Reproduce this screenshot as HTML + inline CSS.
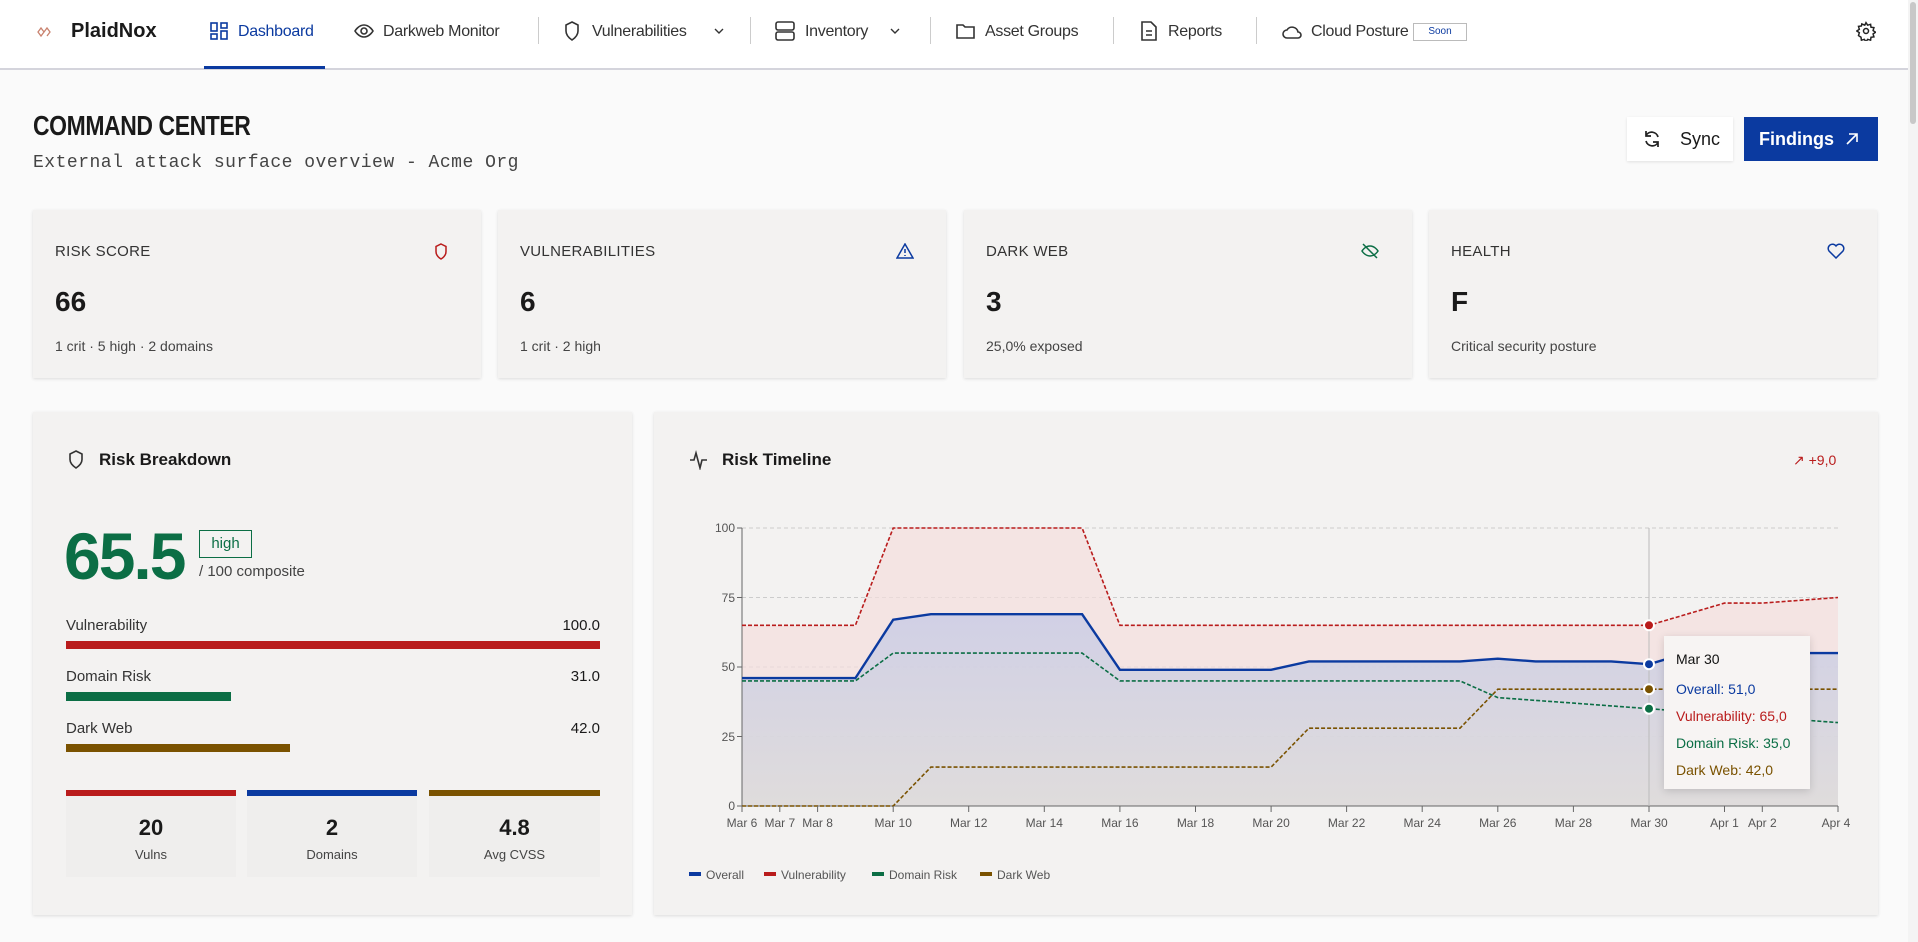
<!DOCTYPE html>
<html><head><meta charset="utf-8"><style>
*{box-sizing:border-box;margin:0;padding:0}
body{width:1918px;height:942px;overflow:hidden;background:#fafafa;font-family:"Liberation Sans",sans-serif;color:#1a1a1a;position:relative}
.a{position:absolute;white-space:nowrap}
.nav{position:absolute;left:0;top:0;width:1908px;height:70px;background:#fff;border-bottom:2px solid #d4d4dc}
.nt{font-size:16px;letter-spacing:-.3px;color:#333;top:23px}
.sep{position:absolute;top:17px;width:1px;height:27px;background:#ccc}
.card{position:absolute;background:#f3f2f1;box-shadow:0 1px 3px rgba(0,0,0,.12)}
.lbl{font-size:15px;color:#333;letter-spacing:.3px}
.val{font-size:28px;font-weight:bold}
.sub{font-size:14px;color:#444}
</style></head><body>
<div class="nav"></div>
<div style="position:absolute;right:0;top:0;width:10px;height:942px;background:#f4f4f4"></div>
<div style="position:absolute;right:2px;top:2px;width:6px;height:122px;background:#c8c8c8;border-radius:3px"></div>
<svg class="a" style="left:36px;top:25px" width="16" height="14" viewBox="0 0 16 14"><path d="M2 7l3-4 3 4-3 4zM8 7l3-4 3 4-3 4" fill="none" stroke="#c9826e" stroke-width="1.3"/></svg>
<div class="a" style="left:71px;top:20px;font-size:20px;font-weight:bold">PlaidNox</div>
<svg class="a" style="left:210px;top:22px" width="18" height="18" viewBox="0 0 18 18" fill="none" stroke="#0b3aa0" stroke-width="1.6"><rect x="1" y="1" width="6" height="8"/><rect x="11" y="1" width="6" height="5"/><rect x="1" y="12" width="6" height="5"/><rect x="11" y="9" width="6" height="8"/></svg>
<div class="a nt" style="left:238px;color:#0b3aa0">Dashboard</div>
<div style="position:absolute;left:204px;top:66px;width:121px;height:3px;background:#0b3aa0"></div>
<svg class="a" style="left:354px;top:23px" width="20" height="16" viewBox="0 0 20 16" fill="none" stroke="#333" stroke-width="1.6"><path d="M1 8s3.5-6 9-6 9 6 9 6-3.5 6-9 6-9-6-9-6z"/><circle cx="10" cy="8" r="3"/></svg>
<div class="a nt" style="left:383px">Darkweb Monitor</div>
<div class="sep" style="left:538px"></div>
<svg class="a" style="left:564px;top:21px" width="16" height="20" viewBox="0 0 16 20" fill="none" stroke="#333" stroke-width="1.6"><path d="M8 1l6 3v6c0 4-3 7-6 9-3-2-6-5-6-9V4z"/></svg>
<div class="a nt" style="left:592px">Vulnerabilities</div>
<svg class="a" style="left:714px;top:28px" width="10" height="7" viewBox="0 0 10 7" fill="none" stroke="#333" stroke-width="1.4"><path d="M1 1l4 4 4-4"/></svg>
<div class="sep" style="left:750px"></div>
<svg class="a" style="left:775px;top:21px" width="20" height="20" viewBox="0 0 20 20" fill="none" stroke="#333" stroke-width="1.6"><rect x="1" y="1" width="18" height="8" rx="2"/><rect x="1" y="11" width="18" height="8" rx="2"/></svg>
<div class="a nt" style="left:805px">Inventory</div>
<svg class="a" style="left:890px;top:28px" width="10" height="7" viewBox="0 0 10 7" fill="none" stroke="#333" stroke-width="1.4"><path d="M1 1l4 4 4-4"/></svg>
<div class="sep" style="left:930px"></div>
<svg class="a" style="left:956px;top:23px" width="20" height="16" viewBox="0 0 20 16" fill="none" stroke="#333" stroke-width="1.6"><path d="M1 2h6l2 2h9v11H1z"/></svg>
<div class="a nt" style="left:985px">Asset Groups</div>
<div class="sep" style="left:1113px"></div>
<svg class="a" style="left:1141px;top:21px" width="16" height="20" viewBox="0 0 16 20" fill="none" stroke="#333" stroke-width="1.6"><path d="M1 1h9l5 5v13H1z M5 10h6 M5 14h6"/></svg>
<div class="a nt" style="left:1168px">Reports</div>
<div class="sep" style="left:1256px"></div>
<svg class="a" style="left:1282px;top:24px" width="20" height="15" viewBox="0 0 20 15" fill="none" stroke="#333" stroke-width="1.6"><path d="M5 14a4 4 0 010-8 6 6 0 0111 2 3 3 0 010 6z"/></svg>
<div class="a nt" style="left:1311px">Cloud Posture</div>
<div class="a" style="left:1413px;top:23px;width:54px;height:18px;border:1px solid #bbb;font-size:10px;color:#0b3aa0;text-align:center;line-height:16px">Soon</div>
<svg class="a" style="left:1856px;top:21px" width="20" height="20" viewBox="0 0 24 24" fill="none" stroke="#222" stroke-width="1.8"><circle cx="12" cy="12" r="3"/><path d="M12 2l2 3 3.5-1 .5 3.5 3.5.5-1 3.5 3 2-3 2 1 3.5-3.5.5-.5 3.5-3.5-1-2 3-2-3-3.5 1-.5-3.5L3 17.5l1-3.5-3-2 3-2-1-3.5 3.5-.5L7 3.5 10.5 5z"/></svg>

<div class="a" style="left:33px;top:110px;font-size:28px;font-weight:bold;transform:scaleX(.82);transform-origin:left;letter-spacing:-.5px">COMMAND CENTER</div>
<div class="a" style="left:33px;top:153px;font-family:'Liberation Mono',monospace;font-size:18px;letter-spacing:.5px;color:#444">External attack surface overview - Acme Org</div>
<div class="a" style="left:1627px;top:117px;width:106px;height:44px;background:#fff;box-shadow:0 1px 3px rgba(0,0,0,.1)"></div>
<svg class="a" style="left:1642px;top:129px" width="20" height="20" viewBox="0 0 20 20" fill="none" stroke="#222" stroke-width="1.7"><path d="M16 8a6.5 6.5 0 00-12-1.5M4 2v5h5 M4 12a6.5 6.5 0 0012 1.5M16 18v-5h-5"/></svg>
<div class="a" style="left:1680px;top:129px;font-size:18px">Sync</div>
<div class="a" style="left:1744px;top:117px;width:134px;height:44px;background:#0b3aa0"></div>
<div class="a" style="left:1759px;top:129px;font-size:18px;font-weight:bold;color:#fff">Findings</div>
<svg class="a" style="left:1846px;top:133px" width="12" height="12" viewBox="0 0 12 12" fill="none" stroke="#fff" stroke-width="1.6"><path d="M1 11L11 1M3 1h8v8"/></svg>

<div class="card" style="left:33px;top:210px;width:448px;height:168px"></div>
<div class="card" style="left:498px;top:210px;width:448px;height:168px"></div>
<div class="card" style="left:964px;top:210px;width:448px;height:168px"></div>
<div class="card" style="left:1429px;top:210px;width:448px;height:168px"></div>
<div class="a lbl" style="left:55px;top:243px">RISK SCORE</div>
<div class="a val" style="left:55px;top:286px">66</div>
<div class="a sub" style="left:55px;top:338px">1 crit · 5 high · 2 domains</div>
<svg class="a" style="left:434px;top:243px" width="14" height="17" viewBox="0 0 14 17" fill="none" stroke="#b91c1c" stroke-width="1.5"><path d="M7 1l5 2.5v5c0 3.5-2.5 6-5 7.5-2.5-1.5-5-4-5-7.5v-5z"/></svg>
<div class="a lbl" style="left:520px;top:243px">VULNERABILITIES</div>
<div class="a val" style="left:520px;top:286px">6</div>
<div class="a sub" style="left:520px;top:338px">1 crit · 2 high</div>
<svg class="a" style="left:896px;top:243px" width="18" height="16" viewBox="0 0 18 16" fill="none" stroke="#0b3aa0" stroke-width="1.5"><path d="M9 1l8 14H1z M9 6v4 M9 12v1"/></svg>
<div class="a lbl" style="left:986px;top:243px">DARK WEB</div>
<div class="a val" style="left:986px;top:286px">3</div>
<div class="a sub" style="left:986px;top:338px">25,0% exposed</div>
<svg class="a" style="left:1361px;top:243px" width="18" height="16" viewBox="0 0 18 16" fill="none" stroke="#0b6e45" stroke-width="1.5"><path d="M1 8s3-5 8-5 8 5 8 5-3 5-8 5-8-5-8-5z M2 1l14 14"/></svg>
<div class="a lbl" style="left:1451px;top:243px">HEALTH</div>
<div class="a val" style="left:1451px;top:286px">F</div>
<div class="a sub" style="left:1451px;top:338px">Critical security posture</div>
<svg class="a" style="left:1827px;top:243px" width="18" height="16" viewBox="0 0 18 16" fill="none" stroke="#0b3aa0" stroke-width="1.5"><path d="M9 15L2 8a4 4 0 017-5 4 4 0 017 5z"/></svg>

<div class="card" style="left:33px;top:412px;width:599px;height:503px"></div>
<div class="card" style="left:654px;top:412px;width:1224px;height:503px"></div>
<svg class="a" style="left:68px;top:450px" width="16" height="19" viewBox="0 0 16 19" fill="none" stroke="#333" stroke-width="1.6"><path d="M8 1l6 3v5.5c0 4-3 6.5-6 8.5-3-2-6-4.5-6-8.5V4z"/></svg>
<div class="a" style="left:99px;top:450px;font-size:17px;font-weight:bold">Risk Breakdown</div>
<div class="a" style="left:64px;top:518px;font-size:66px;font-weight:bold;color:#0b6e45;letter-spacing:-2px">65.5</div>
<div class="a" style="left:199px;top:530px;width:53px;height:28px;border:1px solid #0b6e45;color:#0b6e45;font-size:15px;text-align:center;line-height:26px">high</div>
<div class="a" style="left:199px;top:563px;font-size:15px;color:#444">/ 100 composite</div>
<div class="a" style="left:66px;top:617px;font-size:15px;color:#333">Vulnerability</div>
<div class="a" style="left:540px;top:617px;font-size:15px;width:60px;text-align:right">100.0</div>
<div class="a" style="left:66px;top:641px;width:534px;height:8px;background:#b91c1c"></div>
<div class="a" style="left:66px;top:668px;font-size:15px;color:#333">Domain Risk</div>
<div class="a" style="left:540px;top:668px;font-size:15px;width:60px;text-align:right">31.0</div>
<div class="a" style="left:66px;top:692px;width:165px;height:9px;background:#0b6e45"></div>
<div class="a" style="left:66px;top:720px;font-size:15px;color:#333">Dark Web</div>
<div class="a" style="left:540px;top:720px;font-size:15px;width:60px;text-align:right">42.0</div>
<div class="a" style="left:66px;top:744px;width:224px;height:8px;background:#7a5200"></div>
<div class="a" style="left:66px;top:790px;width:170px;height:87px;background:#efeeed;border-top:6px solid #b91c1c;text-align:center"><div style="font-size:22px;font-weight:bold;margin-top:19px">20</div><div style="font-size:13px;color:#444;margin-top:6px">Vulns</div></div>
<div class="a" style="left:247px;top:790px;width:170px;height:87px;background:#efeeed;border-top:6px solid #0b3aa0;text-align:center"><div style="font-size:22px;font-weight:bold;margin-top:19px">2</div><div style="font-size:13px;color:#444;margin-top:6px">Domains</div></div>
<div class="a" style="left:429px;top:790px;width:171px;height:87px;background:#efeeed;border-top:6px solid #7a5200;text-align:center"><div style="font-size:22px;font-weight:bold;margin-top:19px">4.8</div><div style="font-size:13px;color:#444;margin-top:6px">Avg CVSS</div></div>

<svg class="a" style="left:689px;top:450px" width="20" height="20" viewBox="0 0 20 20" fill="none" stroke="#333" stroke-width="1.6"><path d="M1 10h4l2-7 4 15 2-8h5"/></svg>
<div class="a" style="left:722px;top:450px;font-size:17px;font-weight:bold">Risk Timeline</div>
<div class="a" style="left:1793px;top:452px;font-size:14px;color:#b91c1c">↗ +9,0</div>

<svg class="a" style="left:0;top:0" width="1918" height="942" viewBox="0 0 1918 942" font-family="Liberation Sans, sans-serif">
<defs><linearGradient id="g" x1="0" y1="0" x2="0" y2="1"><stop offset="0" stop-color="#c8cbe6" stop-opacity=".8"/><stop offset="1" stop-color="#dadada" stop-opacity=".8"/></linearGradient></defs>
<g stroke="#ccc" stroke-dasharray="4 3"><line x1="742" y1="528" x2="1838" y2="528"/><line x1="742" y1="597.5" x2="1838" y2="597.5"/><line x1="742" y1="667" x2="1838" y2="667"/><line x1="742" y1="736.5" x2="1838" y2="736.5"/></g>
<polygon fill="#f4dedd" opacity=".7" points="742,806 742,625.3 855.4,625.3 893.2,528 1082.1,528 1119.9,625.3 1649,625.3 1686.8,614.2 1724.5,603.1 1762.3,603.1 1800.1,600.3 1838,597.5 1838,806"/>
<polygon fill="url(#g)" points="742,806 742,678.1 855.4,678.1 893.2,619.7 930.9,614.2 1082.1,614.2 1119.9,669.8 1271.1,669.8 1308.9,661.4 1460,661.4 1497.8,658.7 1535.6,661.4 1611.2,661.4 1649,664.2 1686.8,653.1 1838,653.1 1838,806"/>
<line x1="742" y1="528" x2="742" y2="806" stroke="#666"/><line x1="742" y1="806" x2="1838" y2="806" stroke="#666"/>
<line x1="1649" y1="528" x2="1649" y2="806" stroke="#bbb"/>
<polyline fill="none" stroke="#b91c1c" stroke-width="1.6" stroke-dasharray="4 2" points="742,625.3 855.4,625.3 893.2,528 1082.1,528 1119.9,625.3 1649,625.3 1686.8,614.2 1724.5,603.1 1762.3,603.1 1800.1,600.3 1838,597.5"/>
<polyline fill="none" stroke="#0b6e45" stroke-width="1.6" stroke-dasharray="4 2" points="742,680.9 855.4,680.9 893.2,653.1 1082.1,653.1 1119.9,680.9 1460,680.9 1497.8,697.6 1535.6,700.4 1573.4,703.1 1611.2,705.9 1649,708.7 1686.8,711.5 1724.5,714.3 1762.3,717 1800.1,719.8 1838,722.6"/>
<polyline fill="none" stroke="#7a5200" stroke-width="1.6" stroke-dasharray="4 2" points="742,806 893.2,806 930.9,767.1 1271.1,767.1 1308.9,728.2 1460,728.2 1497.8,689.2 1838,689.2"/>
<polyline fill="none" stroke="#0b3aa0" stroke-width="2.4" points="742,678.1 855.4,678.1 893.2,619.7 930.9,614.2 1082.1,614.2 1119.9,669.8 1271.1,669.8 1308.9,661.4 1460,661.4 1497.8,658.7 1535.6,661.4 1611.2,661.4 1649,664.2 1686.8,653.1 1838,653.1"/>
<g stroke="#fff" stroke-width="2"><circle cx="1649" cy="625.3" r="5" fill="#b91c1c"/><circle cx="1649" cy="664.2" r="5" fill="#0b3aa0"/><circle cx="1649" cy="689.2" r="5" fill="#7a5200"/><circle cx="1649" cy="708.7" r="5" fill="#0b6e45"/></g>
<g font-size="12" fill="#555" text-anchor="end"><text x="735" y="532">100</text><text x="735" y="602">75</text><text x="735" y="671">50</text><text x="735" y="741">25</text><text x="735" y="810">0</text></g>
<g stroke="#666"><line x1="737" y1="528" x2="742" y2="528"/><line x1="737" y1="597.5" x2="742" y2="597.5"/><line x1="737" y1="667" x2="742" y2="667"/><line x1="737" y1="736.5" x2="742" y2="736.5"/><line x1="737" y1="806" x2="742" y2="806"/></g>
<g stroke="#666"><line x1="742" y1="806" x2="742" y2="812"/><line x1="779.8" y1="806" x2="779.8" y2="812"/><line x1="817.6" y1="806" x2="817.6" y2="812"/><line x1="893.2" y1="806" x2="893.2" y2="812"/><line x1="968.7" y1="806" x2="968.7" y2="812"/><line x1="1044.3" y1="806" x2="1044.3" y2="812"/><line x1="1119.9" y1="806" x2="1119.9" y2="812"/><line x1="1195.5" y1="806" x2="1195.5" y2="812"/><line x1="1271.1" y1="806" x2="1271.1" y2="812"/><line x1="1346.6" y1="806" x2="1346.6" y2="812"/><line x1="1422.2" y1="806" x2="1422.2" y2="812"/><line x1="1497.8" y1="806" x2="1497.8" y2="812"/><line x1="1573.4" y1="806" x2="1573.4" y2="812"/><line x1="1649" y1="806" x2="1649" y2="812"/><line x1="1724.5" y1="806" x2="1724.5" y2="812"/><line x1="1762.3" y1="806" x2="1762.3" y2="812"/><line x1="1838" y1="806" x2="1838" y2="812"/></g>
<g font-size="12" fill="#555" text-anchor="middle"><text x="742" y="827">Mar 6</text><text x="779.8" y="827">Mar 7</text><text x="817.6" y="827">Mar 8</text><text x="893.2" y="827">Mar 10</text><text x="968.7" y="827">Mar 12</text><text x="1044.3" y="827">Mar 14</text><text x="1119.9" y="827">Mar 16</text><text x="1195.5" y="827">Mar 18</text><text x="1271.1" y="827">Mar 20</text><text x="1346.6" y="827">Mar 22</text><text x="1422.2" y="827">Mar 24</text><text x="1497.8" y="827">Mar 26</text><text x="1573.4" y="827">Mar 28</text><text x="1649" y="827">Mar 30</text><text x="1724.5" y="827">Apr 1</text><text x="1762.3" y="827">Apr 2</text><text x="1836" y="827">Apr 4</text></g>
<g font-size="12" fill="#555"><rect x="689" y="872" width="12" height="4" fill="#0b3aa0"/><text x="706" y="879">Overall</text><rect x="764" y="872" width="12" height="4" fill="#b91c1c"/><text x="781" y="879">Vulnerability</text><rect x="872" y="872" width="12" height="4" fill="#0b6e45"/><text x="889" y="879">Domain Risk</text><rect x="980" y="872" width="12" height="4" fill="#7a5200"/><text x="997" y="879">Dark Web</text></g>
</svg>
<div class="a" style="left:1664px;top:636px;width:146px;height:153px;background:#f7f4f3;box-shadow:0 2px 8px rgba(0,0,0,.15);font-size:14px;padding:14px 0 0 12px;line-height:27px">
<div style="color:#111;line-height:18px;margin-bottom:8px">Mar 30</div>
<div style="color:#0b3aa0">Overall: 51,0</div>
<div style="color:#b91c1c">Vulnerability: 65,0</div>
<div style="color:#0b6e45">Domain Risk: 35,0</div>
<div style="color:#7a5200">Dark Web: 42,0</div>
</div>
</body></html>
